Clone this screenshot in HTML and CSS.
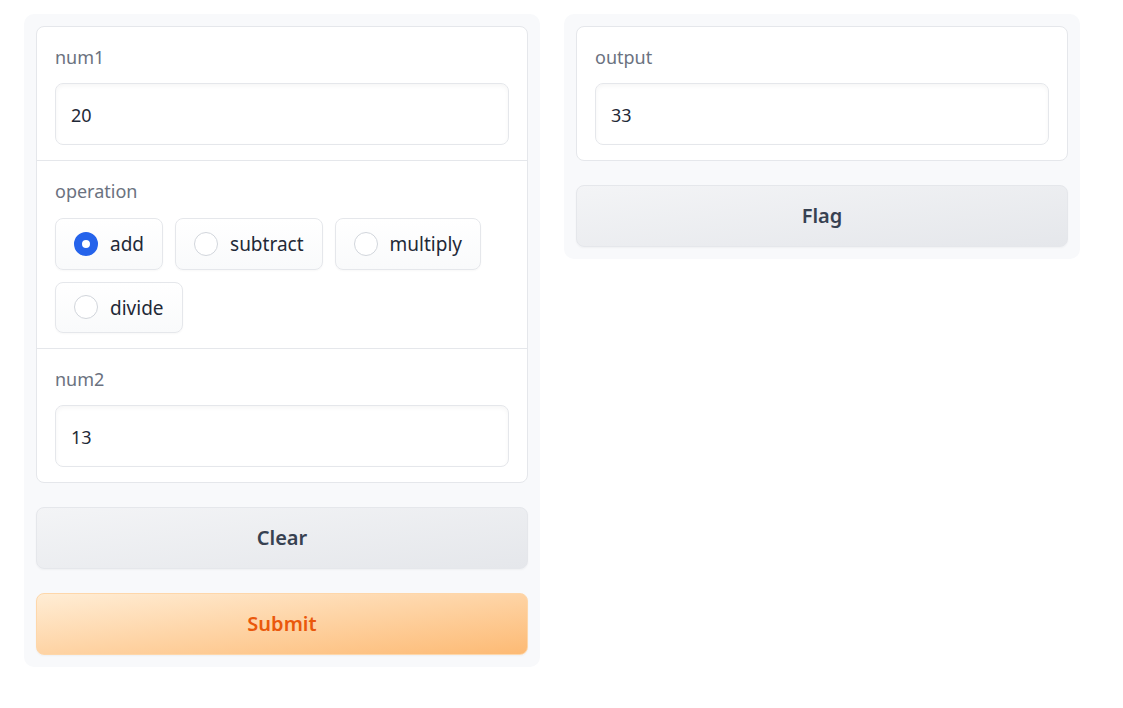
FILE: index.html
```html
<!DOCTYPE html>
<html>
<head>
<meta charset="utf-8">
<link rel="stylesheet" href="styles.css">
</head>
<body>
<div class="app">
  <div class="panel">
    <div class="form">
      <div class="block">
        <div class="label">num1</div>
        <div class="input">20</div>
      </div>
      <div class="block">
        <div class="label">operation</div>
        <div class="radios">
          <div class="radio"><span class="dot checked"></span><span>add</span></div>
          <div class="radio"><span class="dot"></span><span>subtract</span></div>
          <div class="radio"><span class="dot"></span><span>multiply</span></div>
          <div class="radio"><span class="dot"></span><span>divide</span></div>
        </div>
      </div>
      <div class="block">
        <div class="label">num2</div>
        <div class="input">13</div>
      </div>
    </div>
    <button class="btn secondary">Clear</button>
    <button class="btn primary">Submit</button>
  </div>
  <div class="panel">
    <div class="form">
      <div class="block">
        <div class="label">output</div>
        <div class="input">33</div>
      </div>
    </div>
    <button class="btn secondary">Flag</button>
  </div>
</div>
</body>
</html>
```
FILE: styles.css
```css
* { box-sizing: border-box; }
body {
  margin: 0;
  background: #ffffff;
  font-family: "Noto Sans", sans-serif;
}
.app {
  display: grid;
  grid-template-columns: 516px 516px;
  gap: 24px;
  align-items: start;
  padding: 14px 24px;
}
.panel {
  background: #f8f9fb;
  border-radius: 10px;
  padding: 12px;
  display: flex;
  flex-direction: column;
  gap: 24px;
}
.form {
  background: #ffffff;
  border: 1px solid #e5e7eb;
  border-radius: 8px;
  overflow: hidden;
}
.block {
  padding: 17px 18px 15px;
}
.block + .block {
  border-top: 1px solid #e5e7eb;
}
.label {
  font-size: 18px;
  line-height: 26px;
  height: 26px;
  color: #6b7280;
  margin-bottom: 13px;
}
.input {
  height: 62px;
  border: 1px solid #e5e7eb;
  border-radius: 8px;
  box-shadow: inset 0 2px 4px rgba(0,0,0,0.04);
  background: #fff;
  display: flex;
  align-items: center;
  padding: 1px 15px 0;
  font-size: 18px;
  line-height: 24px;
  color: #1f2937;
}
.radios {
  display: flex;
  flex-wrap: wrap;
  gap: 12px;
  padding-top: 1px;
}
.radio {
  height: 51.5px;
  display: flex;
  align-items: center;
  gap: 12px;
  padding: 0 18px;
  border: 1px solid #e5e7eb;
  border-radius: 8px;
  background: linear-gradient(to bottom, #ffffff, #f9fafb);
  box-shadow: 0 1px 2px rgba(0,0,0,0.03);
  font-size: 19px;
  line-height: 26px;
  color: #1f2937;
}
.radio span:last-child {
  padding-top: 1px;
}
.dot {
  width: 24px;
  height: 24px;
  border-radius: 50%;
  border: 1px solid #d1d5db;
  background: #fff;
  flex: none;
}
.dot.checked {
  border: 8px solid #2563eb;
  background: #fff;
}
.btn {
  height: 62px;
  border-radius: 8px;
  font-family: "Noto Sans", sans-serif;
  font-size: 20px;
  font-weight: 600;
  cursor: pointer;
  padding-top: 0;
  box-shadow: 0 1px 2px rgba(0,0,0,0.04);
}
.secondary {
  border: 1px solid #e5e7eb;
  background: linear-gradient(to bottom right, #f3f4f6, #e5e7eb);
  color: #374151;
}
.primary {
  border: 1px solid #fed7aa;
  background: linear-gradient(to bottom right, #ffedd5, #fdba74);
  color: #ea580c;
}
```
